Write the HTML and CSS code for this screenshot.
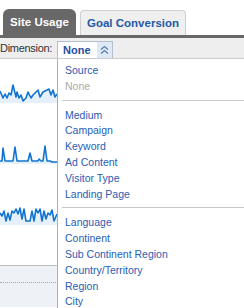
FILE: index.html
```html
<!DOCTYPE html>
<html lang="en">
  <head>
    <meta charset="UTF-8" />
    <meta name="viewport" content="width=device-width, initial-scale=1.0" />
    <title>Site Usage</title>
    <link rel="stylesheet" href="styles.css">
  </head>
  <body>
    <!-- Tabs -->
    <div class="tabs">
      <div class="tab active">Site Usage</div>
      <div class="tab">Goal Conversion</div>
    </div>
    <div class="tab-line"></div>

    <!-- Dimension picker -->
    <div class="toolbar">
      <span class="label">Dimension:</span>
      <div class="picker">
        <span class="picker-value">None</span>
        <span class="picker-toggle">
          <svg width="9" height="10" viewBox="0 0 9 10">
            <polyline points="1,4.5 4.5,1.5 8,4.5" />
            <polyline points="1,8.5 4.5,5.5 8,8.5" />
          </svg>
        </span>
      </div>

      <ul class="menu">
        <li>Source</li>
        <li class="disabled">None</li>
        <li class="sep"></li>
        <li>Medium</li>
        <li>Campaign</li>
        <li>Keyword</li>
        <li>Ad Content</li>
        <li>Visitor Type</li>
        <li>Landing Page</li>
        <li class="sep"></li>
        <li>Language</li>
        <li>Continent</li>
        <li>Sub Continent Region</li>
        <li>Country/Territory</li>
        <li>Region</li>
        <li>City</li>
      </ul>
    </div>

    <!-- Sparklines -->
    <div class="charts">
      <svg class="spark" width="57" height="20" viewBox="0 84 57 20">
        <polygon class="fill" points="0,92 3,99 5,95 7,99 9,94 11,96 13,86 16,98 17,93 19,99 21,96 23,102 26,99 28,93 31,99 33,96 36,93 38,91 40,98 43,93 47,91 49,90 51,96 53,91 55,98 57,95 57,104 0,104" />
        <polyline class="line" points="0,92 3,99 5,95 7,99 9,94 11,96 13,86 16,98 17,93 19,99 21,96 23,102 26,99 28,93 31,99 33,96 36,93 38,91 40,98 43,93 47,91 49,90 51,96 53,91 55,98 57,95" />
      </svg>
      <svg class="spark" width="57" height="20" viewBox="0 145 57 20">
        <polygon class="fill" points="0,162 2,162 3,149 5,162 13,162 15,148 17,162 28,162 30,154 32,162 38,162 39,160 41,162 43,162 45,147 47,162 50,162 52,163 57,163 57,165 0,165" />
        <polyline class="line" points="0,162 2,162 3,149 5,162 13,162 15,148 17,162 28,162 30,154 32,162 38,162 39,160 41,162 43,162 45,147 47,162 50,162 52,163 57,163" />
      </svg>
      <svg class="spark" width="57" height="20" viewBox="0 206 57 20">
        <polygon class="fill" points="0,214 2,217 4,212 6,222 8,214 10,221 12,212 14,214 16,210 18,215 20,209 22,220 24,210 26,222 30,222 32,212 34,222 36,210 38,214 40,210 42,222 44,212 46,220 48,214 50,216 52,211 54,222 57,215 57,226 0,226" />
        <polyline class="line" points="0,214 2,217 4,212 6,222 8,214 10,221 12,212 14,214 16,210 18,215 20,209 22,220 24,210 26,222 30,222 32,212 34,222 36,210 38,214 40,210 42,222 44,212 46,220 48,214 50,216 52,211 54,222 57,215" />
      </svg>
    </div>

    <div class="summary">
      <div class="summary-row"></div>
    </div>
  </body>
</html>
```

FILE: styles.css
```css
body {
  margin: 0;
  width: 244px;
  height: 308px;
  overflow: hidden;
  font-family: "Liberation Sans", Arial, sans-serif;
  background: #fff;
}
.tabs {
  display: flex;
  align-items: flex-end;
  gap: 4px;
  padding: 9px 0 0 3px;
  height: 26px;
}
.tab {
  box-sizing: border-box;
  height: 25px;
  padding: 0 6px;
  line-height: 24px;
  font-size: 11.5px;
  font-weight: bold;
  color: #2459a8;
  background: #efefef;
  border: 1px solid #cfcfcf;
  border-bottom: none;
  border-radius: 4px 4px 0 0;
}
.tab.active {
  height: 26px;
  width: 73px;
  line-height: 26px;
  text-align: center;
  color: #fff;
  background: #686868;
  border: none;
  border-radius: 6px 6px 0 0;
}
.tab-line {
  height: 3px;
  background: #686868;
}
.toolbar {
  position: relative;
  display: flex;
  align-items: flex-end;
  height: 20px;
  background: #eeeeee;
  border-bottom: 1px solid #cccccc;
}
.label {
  width: 57px;
  font-size: 11px;
  color: #333;
  line-height: 17px;
  letter-spacing: -0.3px;
  padding-bottom: 1px;
}
.picker {
  display: flex;
  box-sizing: border-box;
  width: 56px;
  height: 17px;
  background: #fff;
  border: 1px solid #b4c0cf;
  border-bottom: none;
}
.picker-value {
  flex: 1;
  padding-left: 5px;
  font-size: 11px;
  font-weight: bold;
  line-height: 16px;
  color: #1f4e9e;
}
.picker-toggle {
  display: flex;
  align-items: center;
  justify-content: center;
  width: 15px;
  background: #dde9f6;
}
.picker-toggle polyline {
  fill: none;
  stroke: #5a7bab;
  stroke-width: 1.2;
}
.menu {
  position: absolute;
  top: 21px;
  left: 57px;
  right: -2px;
  height: 249px;
  box-sizing: border-box;
  margin: 0;
  padding: 4px 0 0 7px;
  list-style: none;
  background: #fff;
  border-left: 1px solid #aeaeae;
  z-index: 2;
}
.menu li {
  font-size: 10.5px;
  line-height: 15.8px;
  color: #2a5cb4;
}
.menu li.disabled {
  color: #aaaaaa;
}
.menu li.sep {
  height: 0;
  margin: 5px 2px 7px -3px;
  border-top: 1px solid #c8c8c8;
}
.charts {
  display: flex;
  flex-direction: column;
  gap: 41px;
  height: 206px;
  box-sizing: border-box;
  padding-top: 24px;
}
.spark {
  display: block;
}
.spark .fill {
  fill: #e5f0fa;
}
.spark .line {
  fill: none;
  stroke: #1274cf;
  stroke-width: 1.6;
  stroke-linejoin: round;
}
.summary {
  height: 41px;
  background: #eef1f6;
  border-top: 1px solid #bbbbbb;
}
.summary-row {
  height: 16px;
  border-bottom: 1px dotted #a8a8a8;
}
```
